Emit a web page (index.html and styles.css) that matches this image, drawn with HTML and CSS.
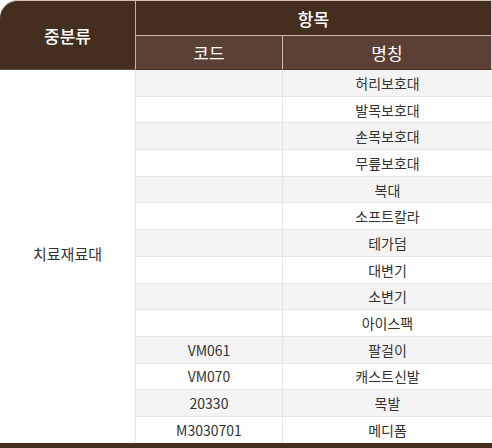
FILE: index.html
```html
<!DOCTYPE html>
<html lang="ko">
<head>
<meta charset="utf-8">
<link rel="stylesheet" href="styles.css">
</head>
<body>
<table class="tbl">
  <colgroup>
    <col class="c1"><col class="c2"><col class="c3">
  </colgroup>
  <thead>
    <tr class="h1">
      <th rowspan="2" class="cat">중분류</th>
      <th colspan="2" class="grp">항목</th>
    </tr>
    <tr class="h2">
      <th class="sub code">코드</th>
      <th class="sub name">명칭</th>
    </tr>
  </thead>
  <tbody>
    <tr class="odd"><td rowspan="14" class="cat-cell">치료재료대</td><td></td><td>허리보호대</td></tr>
    <tr><td></td><td>발목보호대</td></tr>
    <tr class="odd"><td></td><td>손목보호대</td></tr>
    <tr><td></td><td>무릎보호대</td></tr>
    <tr class="odd"><td></td><td>복대</td></tr>
    <tr><td></td><td>소프트칼라</td></tr>
    <tr class="odd"><td></td><td>테가덤</td></tr>
    <tr><td></td><td>대변기</td></tr>
    <tr class="odd"><td></td><td>소변기</td></tr>
    <tr><td></td><td>아이스팩</td></tr>
    <tr class="odd"><td>VM061</td><td>팔걸이</td></tr>
    <tr><td>VM070</td><td>캐스트신발</td></tr>
    <tr class="odd"><td>20330</td><td>목발</td></tr>
    <tr><td>M3030701</td><td>메디폼</td></tr>
  </tbody>
</table>
</body>
</html>
```

FILE: styles.css
```css
html, body {
  margin: 0;
  padding: 0;
  background: #ffffff;
}
body {
  width: 492px;
  height: 448px;
  overflow: hidden;
  font-family: "Noto Sans CJK KR", "Noto Sans", sans-serif;
}
.tbl {
  width: 492px;
  border-collapse: separate;
  border-spacing: 0;
  table-layout: fixed;
  border-bottom: 5px solid #432e1f;
}
.c1 { width: 136px; }
.c2 { width: 147px; }
.c3 { width: 209px; }

th {
  color: #ffffff;
  font-weight: 500;
  font-size: 17px;
  padding: 0;
  text-align: center;
}
.h1 th {
  height: 34px;
  background: #432e1f;
  border-top: 1px solid #cdc2bb;
}
.cat {
  border-top-left-radius: 18px;
  border-right: 1px solid #c4b5ab;
  border-bottom: 1px solid #5e4a3e;
}
.grp {
  border-right: 1px solid #d4cbc6;
  border-bottom: 1px solid #c9bbb2;
}
.h2 th {
  height: 33px;
  background: #5b4036;
  font-weight: 400;
  border-bottom: 1px solid #4a3329;
}
.code {
  border-right: 1px solid #c9bbb2;
}
.name {
  border-right: 1px solid #d4cbc6;
}

td {
  height: 25.7px;
  padding: 0;
  text-align: center;
  font-size: 14px;
  color: #333333;
  border-bottom: 1px solid #e6e6e6;
  background: #ffffff;
}
tr.odd td {
  background: #f4f4f4;
}
td:not(.cat-cell):first-child,
tr td.cat-cell + td {
  border-right: 1px solid #e6e6e6;
}
tbody tr:not(:first-child) td:first-child {
  border-left: 0;
}
.cat-cell {
  background: #ffffff !important;
  border-right: 1px solid #e6e6e6;
  border-bottom: 0;
  font-size: 15px;
  padding-bottom: 6px;
}
tbody tr:last-child td {
  border-bottom: 0;
}
```
